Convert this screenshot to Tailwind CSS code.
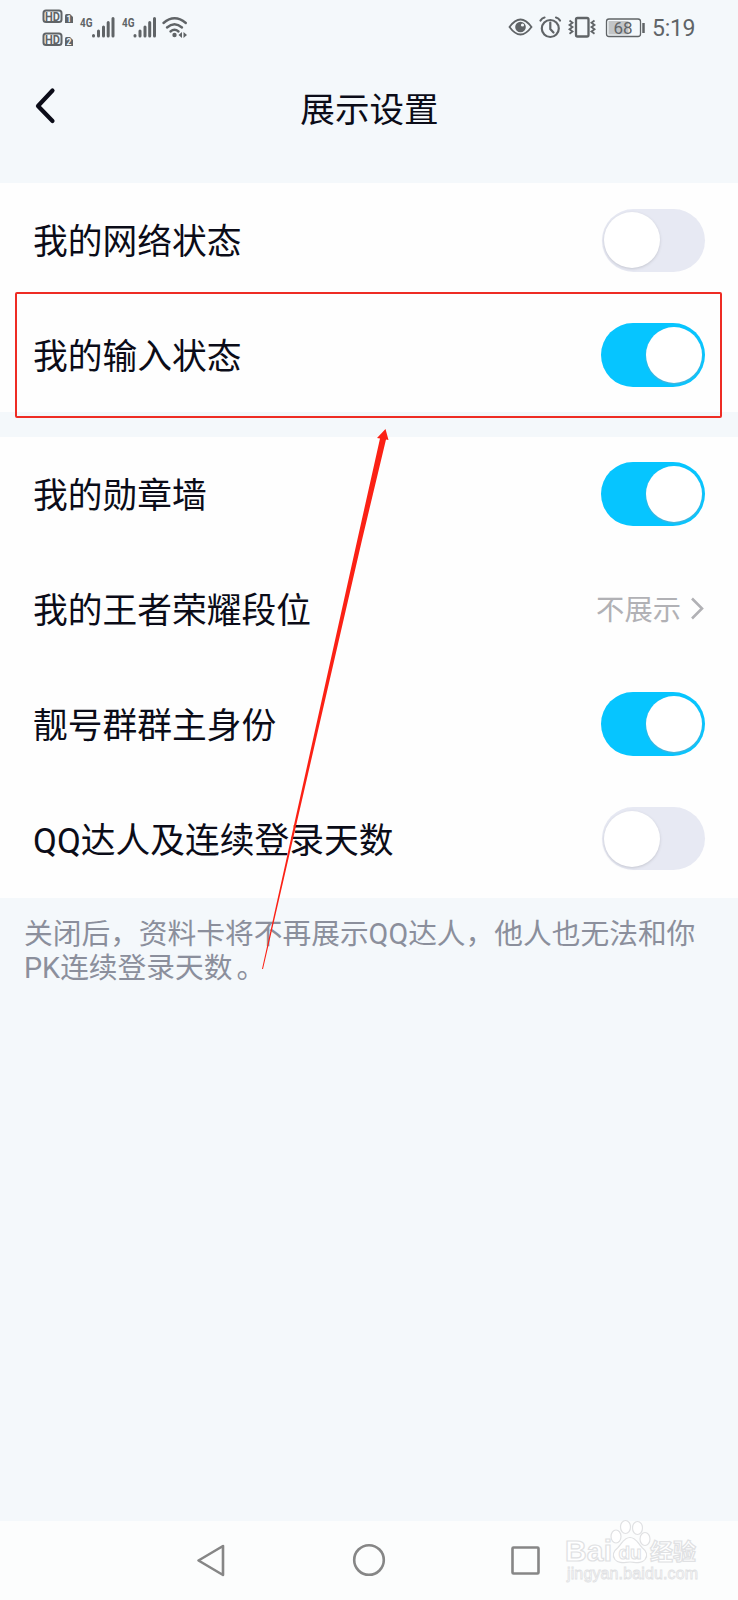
<!DOCTYPE html>
<html lang="zh-CN">
<head>
  <meta charset="UTF-8">
  <meta name="viewport" content="width=device-width, initial-scale=1.0">
  <title>展示设置</title>
  <script src="https://cdn.jsdelivr.net/npm/@tailwindcss/browser@4"></script>
</head>
<body class="bg-[#f4f8fb] font-[Roboto,'Noto_Sans_CJK_SC',sans-serif] text-[#0b0c18]">
  <div class="relative flex h-[1600px] w-[738px] flex-col overflow-hidden">

    <!-- Status bar -->
    <div class="flex h-14 shrink-0 items-start justify-between pr-[43px] pl-[42px] text-[#606467]">
      <svg class="h-14 w-[150px]" viewBox="42 0 150 56" fill="currentColor">
        <rect x="43.500" y="10.500" width="18" height="11.500" rx="2.500" fill="none" stroke="currentColor" stroke-width="2"/>
        <text x="52.500" y="20.500" text-anchor="middle" font-size="12" font-weight="700" textLength="15" lengthAdjust="spacingAndGlyphs">HD</text>
        <path d="M65 15.500q0-1.500 1.500-1.500H70l3 3v6H65z"/>
        <text x="69" y="22" text-anchor="middle" font-size="8.500" font-weight="700" fill="#f4f8fb">1</text>
        <rect x="43.500" y="33.500" width="18" height="11.500" rx="2.500" fill="none" stroke="currentColor" stroke-width="2"/>
        <text x="52.500" y="43.500" text-anchor="middle" font-size="12" font-weight="700" textLength="15" lengthAdjust="spacingAndGlyphs">HD</text>
        <path d="M65 38.500q0-1.500 1.500-1.500H70l3 3v6H65z"/>
        <text x="69" y="45" text-anchor="middle" font-size="8.500" font-weight="700" fill="#f4f8fb">2</text>
        <text x="80" y="26.500" font-size="13" font-weight="700" textLength="12.500" lengthAdjust="spacingAndGlyphs">4G</text>
        <path d="M93.500 35.500v.5M98.500 31v5M103.500 27v9M108.200 22.500v13.500M113 18.500v17.500" stroke="currentColor" stroke-width="3" stroke-linecap="round"/>
        <text x="122" y="26.500" font-size="13" font-weight="700" textLength="12.500" lengthAdjust="spacingAndGlyphs">4G</text>
        <path d="M135 35.500v.5M140 31v5M145 27v9M149.700 22.500v13.500M154.500 18.500v17.500" stroke="currentColor" stroke-width="3" stroke-linecap="round"/>
        <path d="M163.500 23Q174.500 13.500 185.800 23M167 27.500q7.500-6.500 15 0M170.500 31.500q4-3.500 8 0" fill="none" stroke="currentColor" stroke-width="2.400" stroke-linecap="round"/>
        <circle cx="174.500" cy="35" r="2.200"/>
        <path d="M182 32v6l-3.500-3zM183.500 32v6l3.500-3z"/>
      </svg>
      <svg class="h-14 w-[190px]" viewBox="505 0 190 56" fill="none" stroke="currentColor">
        <path d="M509.500 27Q520.500 12 531.500 27Q520.500 42 509.500 27z" stroke-width="1.800"/>
        <circle cx="520.500" cy="27" r="5.300" fill="currentColor" stroke="none"/>
        <circle cx="522.500" cy="25" r="1.600" fill="#f4f8fb" stroke="none"/>
        <circle cx="550.300" cy="28.500" r="8.500" stroke-width="2.200"/>
        <path d="M550.300 22.500v6.500l3.200 3.500M540.500 20.500q1.500-2.500 4-3M560 20.500q-1.500-2.500-4-3" stroke-width="2.200" stroke-linecap="round"/>
        <rect x="576" y="18" width="12.500" height="18.500" rx="1.500" stroke-width="2.300"/>
        <path d="M569.500 20.500l3 2.200-3 2.200 3 2.200-3 2.200 3 2.200-3 2.200M594.500 20.500l-3 2.200 3 2.200-3 2.200 3 2.200-3 2.200 3 2.200" stroke-width="1.800"/>
        <rect x="606.500" y="19" width="34" height="17.500" rx="2.500" stroke-width="1.300"/>
        <rect x="608.500" y="21" width="20" height="13.500" fill="#c2c5c7" stroke="none"/>
        <path d="M643.500 23v10" stroke-width="2.500"/>
        <text x="623" y="33.500" text-anchor="middle" font-size="17" fill="currentColor" stroke="none">68</text>
        <text x="652" y="36" font-size="23" fill="currentColor" stroke="none" textLength="43.500">5:19</text>
      </svg>
    </div>

    <!-- Header -->
    <header class="flex h-[127px] shrink-0 items-start">
      <svg class="mt-[31px] ml-[34px] h-10 w-6" viewBox="0 0 24 40" fill="none" stroke="#0b0c18" stroke-width="4.200" stroke-linecap="round" stroke-linejoin="round">
        <path d="M18.500 3.500 4 19 18.500 34"/>
      </svg>
      <h1 class="mt-7 flex-1 pr-[57px] text-center text-[34.600px] leading-[52px]">展示设置</h1>
    </header>

    <!-- Status settings -->
    <section class="h-[229px] shrink-0 bg-[#fefefe]">
      <div class="flex h-[114px] items-center justify-between pr-[33px] pl-[33px]">
        <span class="pt-1 text-[34.750px] leading-[52px]">我的网络状态</span>
        <span class="flex h-[63px] w-[103px] items-center rounded-full bg-[#e7e9f3] pl-[2px]"><i class="size-[56px] rounded-full bg-white shadow-[0_1px_3px_#c4c6d0]"></i></span>
      </div>
      <div class="flex h-[115px] items-center justify-between pr-[33px] pl-[33px]">
        <span class="pt-1 text-[34.750px] leading-[52px]">我的输入状态</span>
        <span class="flex h-[64px] w-[104px] items-center justify-end rounded-full bg-[#06c5ff] pr-[3px]"><i class="size-[56px] rounded-full bg-white shadow-[0_1px_2px_#5aaed0]"></i></span>
      </div>
    </section>

    <!-- Profile settings -->
    <section class="mt-[25px] h-[461px] shrink-0 bg-[#fefefe]">
      <div class="flex h-[114px] items-center justify-between pr-[33px] pl-[33px]">
        <span class="pt-1 text-[34.750px] leading-[52px]">我的勋章墙</span>
        <span class="flex h-[64px] w-[104px] items-center justify-end rounded-full bg-[#06c5ff] pr-[3px]"><i class="size-[56px] rounded-full bg-white shadow-[0_1px_2px_#5aaed0]"></i></span>
      </div>
      <div class="flex h-[115px] items-center justify-between pr-[33px] pl-[33px]">
        <span class="pt-1 text-[34.750px] leading-[52px]">我的王者荣耀段位</span>
        <span class="flex items-center text-[28.300px] leading-[42px] text-[#b1b1b5]"><span class="pt-1">不展示</span>
          <svg class="ml-2 h-6 w-4" viewBox="0 0 16 24" fill="none" stroke="#b1b1b5" stroke-width="2.600"><path d="m3 1.500 10 10-10 10"/></svg>
        </span>
      </div>
      <div class="flex h-[115px] items-center justify-between pr-[33px] pl-[33px]">
        <span class="pt-1 text-[34.750px] leading-[52px]">靓号群群主身份</span>
        <span class="flex h-[64px] w-[104px] items-center justify-end rounded-full bg-[#06c5ff] pr-[3px]"><i class="size-[56px] rounded-full bg-white shadow-[0_1px_2px_#5aaed0]"></i></span>
      </div>
      <div class="flex h-[115px] items-center justify-between pr-[33px] pl-[33px]">
        <span class="pt-1 text-[34.750px] leading-[52px]">QQ达人及连续登录天数</span>
        <span class="flex h-[63px] w-[103px] items-center rounded-full bg-[#e7e9f3] pl-[2px]"><i class="size-[56px] rounded-full bg-white shadow-[0_1px_3px_#c4c6d0]"></i></span>
      </div>
    </section>

    <p class="mt-5 pl-6 text-[28.720px] leading-[33.700px] whitespace-nowrap text-[#8b8f9c]">关闭后，资料卡将不再展示QQ达人，他人也无法和你<br>PK连续登录天数<span class="pl-1">。</span></p>

    <!-- Navigation keys -->
    <nav class="mt-auto flex h-[79px] shrink-0 justify-center bg-[#fcfdfd]">
      <svg class="h-[79px] w-[360px]" viewBox="189 1521 360 79" fill="none" stroke="#868686" stroke-width="2.600" stroke-linejoin="round">
        <path d="M198.500 1560.500 223 1546v29z"/>
        <circle cx="369" cy="1560" r="14.800"/>
        <rect x="512.500" y="1547.500" width="26" height="26" rx="1"/>
      </svg>
    </nav>

    <!-- Watermark -->
    <svg class="absolute top-[1510px] left-[555px] h-[90px] w-[160px]" viewBox="555 1510 160 90" fill="#fff" stroke="#e0e1e3" stroke-width="1.200">
      <text x="565" y="1561" font-family="Liberation Sans" font-size="30" font-weight="700" textLength="47">Bai</text>
      <ellipse cx="616" cy="1536.500" rx="5" ry="6.500"/>
      <ellipse cx="625.500" cy="1527" rx="5" ry="6.500"/>
      <ellipse cx="637.500" cy="1528" rx="5" ry="6.500"/>
      <ellipse cx="645" cy="1539" rx="5" ry="6.500"/>
      <path d="M630 1537.500c6 0 8 6 12 10 5 4 6 8 3 12-4 5-10 2.500-15 2.500s-11 2.500-15-2.500c-3-4-2-8 3-12 4-4 6-10 12-10z"/>
      <text x="630" y="1558.500" text-anchor="middle" font-family="Liberation Sans" font-size="19" font-weight="700" stroke-width="1">du</text>
      <text x="650" y="1560" font-family="Noto Sans CJK SC" font-size="23" font-weight="700" textLength="46">经验</text>
      <text x="567" y="1579" font-family="Liberation Sans" font-size="16" textLength="131" stroke-width=".8">jingyan.baidu.com</text>
    </svg>

    <!-- Highlight box and pointer arrow -->
    <div class="absolute top-[292px] left-[15px] h-[126px] w-[707px] rounded-[2px] border-2 border-[#ee2c24]"></div>
    <svg class="absolute top-0 left-0 h-[1000px] w-[738px]" viewBox="0 0 738 1000" fill="#fb2115">
      <path d="M262 969 357.300 540 380 438.500 377 438 385.500 429 388.500 440 386 439.500 362 540 263 969z"/>
    </svg>
  </div>
</body>
</html>
